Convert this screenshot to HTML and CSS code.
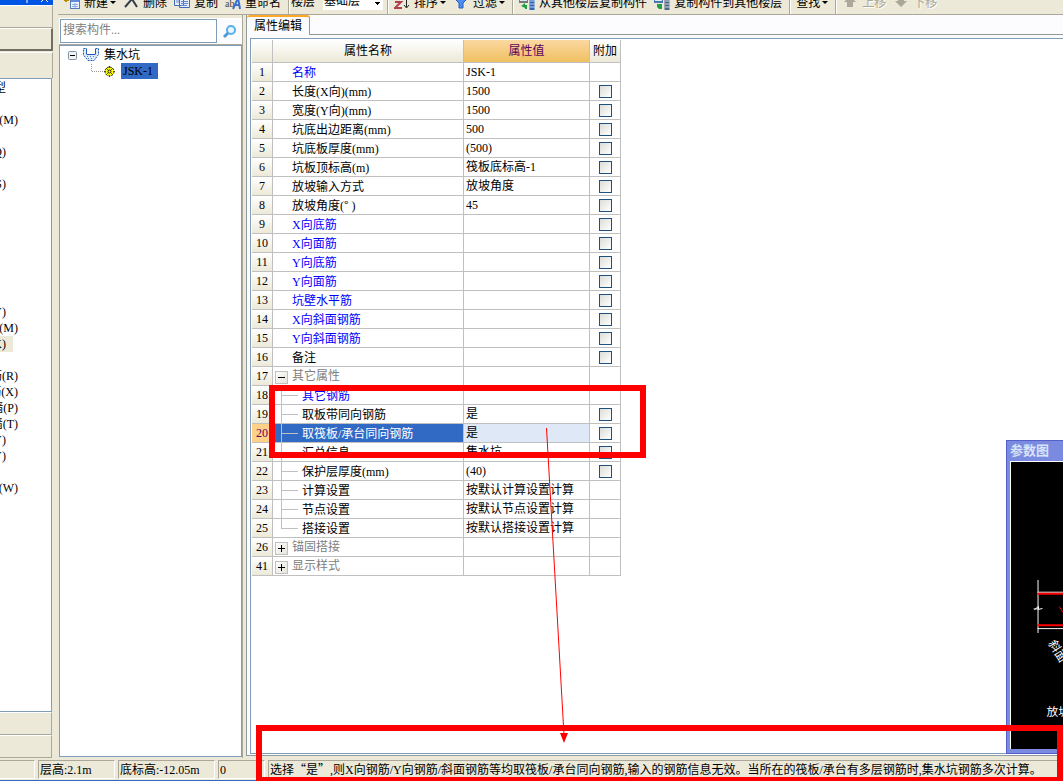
FILE: index.html
```html
<!DOCTYPE html>
<html lang="zh-CN">
<head>
<meta charset="utf-8">
<title>属性编辑</title>
<link rel="stylesheet" href="styles.css">
</head>
<body>
<div class="workspace">
  <aside class="modules">
    <div class="modules-title"><svg width="30" height="5" viewBox="0 0 30 5"><path d="M4 0V3M18 2L20 0M23 0L25 2" stroke="#fff" fill="none"/></svg></div>
    <div class="bar"></div>
    <div class="bar raised"></div>
    <div class="bar open"></div>
    <ul class="module-list">
      <li><span class="short">型</span></li><li></li>
      <li><span>墙(M)</span></li><li></li>
      <li><span class="short">Q)</span></li><li></li>
      <li><span class="short">S)</span></li><li></li><li></li><li></li><li></li><li></li><li></li><li></li>
      <li><span class="short">Y)</span></li>
      <li><span>墙(M)</span></li>
      <li class="current"><span class="short">K)</span></li><li></li>
      <li><span>筋(R)</span></li>
      <li><span>筋(X)</span></li>
      <li><span>墙(P)</span></li>
      <li><span>墙(T)</span></li>
      <li><span class="short">Y)</span></li>
      <li><span class="short">Y)</span></li><li></li>
      <li><span>子(W)</span></li>
    </ul>
    <div class="bar foot"></div>
    <div class="bar foot"></div>
  </aside>

  <div class="main">
    <div class="toolbar">
      <button><svg class="icon" viewBox="0 0 16 16"><path d="M2 0v7M0 5h5" stroke="#b58a00" stroke-width="2"/><rect x="6.500" y="4.500" width="9" height="9" fill="#eaf2ff" stroke="#5c7cb8"/><path d="M7 6h8" stroke="#5c8be0" stroke-width="2"/><path d="M8 9.500h6M8 11.500h6M11 8v5" stroke="#8faee0"/></svg>新建<i class="caret"></i></button>
      <button><svg class="icon" viewBox="0 0 16 16"><path d="M2 12L9 4L14 12M4 0L9 5" fill="none" stroke="#333b4d" stroke-width="2"/></svg>删除</button>
      <button><svg class="icon" viewBox="0 0 16 16"><path d="M.5.5h9v10h-9zM5.500 3.500h10v9h-10z" fill="#e4eeff" stroke="#426bb5"/><path d="M2 5h3M2 7h3M7 6.500h7M7 8.500h7M7 10.500h6" stroke="#6688c8"/></svg>复制</button>
      <button><svg class="icon" viewBox="0 0 16 16"><text x="0" y="12" class="glyph">ab</text><path d="M8 14L13 3L15 14M10 10h5" fill="none" stroke="#3b6fd0" stroke-width="2"/></svg>重命名</button>
      <span class="sep tight"></span>
      <label for="floor">楼层</label>
      <select id="floor"><option>基础层</option></select>
      <span class="sep"></span>
      <button><svg class="icon" viewBox="0 0 16 16"><path d="M1 7h6L1 13h7" fill="none" stroke="#b04050" stroke-width="2"/><path d="M2 5L4 0L6 5" fill="none" stroke="#4468b8" stroke-width="2"/><path d="M12.500 0v12M10 10l2.500 3L15 10" fill="none" stroke="#222"/></svg>排序<i class="caret"></i></button>
      <button><svg class="icon" viewBox="0 0 16 16"><path d="M3 2h10v3L10 8v5H6V8L3 5z" fill="#4e8df0" stroke="#245cc0"/></svg>过滤<i class="caret"></i></button>
      <span class="sep"></span>
      <button><svg class="icon" viewBox="0 0 16 16"><path d="M0 0h9v8H0z" fill="#777"/><path d="M1 1h7v5H1z" fill="#dce8fa"/><path d="M2 11l4-3v2h2v4H6v-1z" fill="#20a045"/><path d="M13 0v15" stroke="#3267b0" stroke-width="5"/><path d="M11 3h5M11 6h5M11 9h5M11 12h5" stroke="#b8d2ff"/></svg>从其他楼层复制构件</button>
      <button><svg class="icon" viewBox="0 0 16 16"><path d="M0 0h9v8H0z" fill="#4878b0"/><path d="M1 1h7v5H1z" fill="#dce8fa"/><path d="M3 9h5v5H5l-2-2z" fill="#20a045"/><path d="M13 0v15" stroke="#506888" stroke-width="5"/><path d="M11 3h5M11 6h5M11 9h5M11 12h5" stroke="#c8d4e8"/></svg>复制构件到其他楼层</button>
      <span class="sep"></span>
      <button>查找<i class="caret"></i></button>
      <span class="sep"></span>
      <button disabled><svg class="icon" viewBox="0 0 16 16"><path d="M8 1L14 7h-3v5H5V7H2z" fill="#aca899"/></svg>上移</button>
      <button disabled><svg class="icon" viewBox="0 0 16 16"><path d="M5 1h6v5h3L8 12L2 6h3z" fill="#aca899"/></svg>下移</button>
    </div>

    <div class="panes">
      <section class="components">
        <div class="search">
          <input type="text" aria-label="搜索构件" placeholder="搜索构件...">
          <button aria-label="搜索"><svg width="16" height="16" viewBox="0 0 16 16"><circle cx="9" cy="6" r="4" fill="#e8f6ff" stroke="#58b0ea" stroke-width="2"/><path d="M6 9L2 13" stroke="#4a9cdc" stroke-width="3"/></svg></button>
        </div>
        <div class="tree">
          <div class="node">
            <button class="fold" aria-label="折叠"><svg width="9" height="9" viewBox="0 0 9 9"><rect x=".5" y=".5" width="8" height="8" rx="1" fill="#f4f3ec" stroke="#7b93ad"/><path d="M2 4.500h5" stroke="#000"/></svg></button>
            <svg class="pit" width="16" height="14" viewBox="0 0 16 14"><path d="M.5.5h3v6h9v-6h3v6L11 12.500H5L.5 7z" fill="#dceafa" stroke="#1d58b8" stroke-dasharray="2 1"/><path d="M4 6.500h8M3.500 1v5M12.500 1v5" stroke="#1d58b8"/><path d="M4 8.500h8M5 10.500h6" stroke="#4d8bd0" stroke-dasharray="1 2"/></svg>
            集水坑
          </div>
          <div class="node child">
            <svg class="dots" width="12" height="16" viewBox="0 0 12 16"><path d="M.5 1v7.500H12" fill="none" stroke="#999" stroke-dasharray="1 1"/></svg>
            <svg class="gear" width="11" height="11" viewBox="0 0 11 11"><circle cx="5.500" cy="5.500" r="4.500" fill="#ff0" stroke="#222" stroke-dasharray="2 1"/><path d="M5.500 0v11M0 5.500h11M2 2l7 7M9 2L2 9" stroke="#554f00"/><path d="M5.500 2v7M2 5.500h7" stroke="#ff0"/><circle cx="5.500" cy="5.500" r="1.500" fill="#ff0" stroke="#222"/></svg>
            <span class="picked">JSK-1</span>
          </div>
        </div>
      </section>

      <section class="editor">
        <div class="tabs"><button class="tab">属性编辑</button></div>
        <div class="sheet">
          <table>
            <colgroup><col class="c-num"><col class="c-name"><col class="c-value"><col class="c-add"></colgroup>
            <thead><tr><th></th><th>属性名称</th><th class="active">属性值</th><th>附加</th></tr></thead>
            <tbody>
              <tr><th>1</th><td class="name key">名称</td><td>JSK-1</td><td></td></tr>
              <tr><th>2</th><td class="name">长度(X向)(mm)</td><td>1500</td><td><input type="checkbox" aria-label="附加 长度"></td></tr>
              <tr><th>3</th><td class="name">宽度(Y向)(mm)</td><td>1500</td><td><input type="checkbox" aria-label="附加 宽度"></td></tr>
              <tr><th>4</th><td class="name">坑底出边距离(mm)</td><td>500</td><td><input type="checkbox" aria-label="附加 坑底出边距离"></td></tr>
              <tr><th>5</th><td class="name">坑底板厚度(mm)</td><td>(500)</td><td><input type="checkbox" aria-label="附加 坑底板厚度"></td></tr>
              <tr><th>6</th><td class="name">坑板顶标高(m)</td><td>筏板底标高-1</td><td><input type="checkbox" aria-label="附加 坑板顶标高"></td></tr>
              <tr><th>7</th><td class="name">放坡输入方式</td><td>放坡角度</td><td><input type="checkbox" aria-label="附加 放坡输入方式"></td></tr>
              <tr><th>8</th><td class="name">放坡角度(<b>°</b> )</td><td>45</td><td><input type="checkbox" aria-label="附加 放坡角度"></td></tr>
              <tr><th>9</th><td class="name key">X向底筋</td><td></td><td><input type="checkbox" aria-label="附加 X向底筋"></td></tr>
              <tr><th>10</th><td class="name key">X向面筋</td><td></td><td><input type="checkbox" aria-label="附加 X向面筋"></td></tr>
              <tr><th>11</th><td class="name key">Y向底筋</td><td></td><td><input type="checkbox" aria-label="附加 Y向底筋"></td></tr>
              <tr><th>12</th><td class="name key">Y向面筋</td><td></td><td><input type="checkbox" aria-label="附加 Y向面筋"></td></tr>
              <tr><th>13</th><td class="name key">坑壁水平筋</td><td></td><td><input type="checkbox" aria-label="附加 坑壁水平筋"></td></tr>
              <tr><th>14</th><td class="name key">X向斜面钢筋</td><td></td><td><input type="checkbox" aria-label="附加 X向斜面钢筋"></td></tr>
              <tr><th>15</th><td class="name key">Y向斜面钢筋</td><td></td><td><input type="checkbox" aria-label="附加 Y向斜面钢筋"></td></tr>
              <tr><th>16</th><td class="name">备注</td><td></td><td><input type="checkbox" aria-label="附加 备注"></td></tr>
              <tr><th>17</th><td class="group"><button class="toggle" aria-label="折叠 其它属性"><svg width="13" height="13" viewBox="0 0 13 13"><path d="M3 6.500h7" stroke="#000"/></svg></button>其它属性</td><td></td><td></td></tr>
              <tr><th>18</th><td class="name leaf key">其它钢筋</td><td></td><td></td></tr>
              <tr><th>19</th><td class="name leaf">取板带同向钢筋</td><td>是</td><td><input type="checkbox" aria-label="附加 取板带同向钢筋"></td></tr>
              <tr class="selected"><th>20</th><td class="name leaf">取筏板/承台同向钢筋</td><td>是</td><td><input type="checkbox" aria-label="附加 取筏板/承台同向钢筋"></td></tr>
              <tr><th>21</th><td class="name leaf">汇总信息</td><td>集水坑</td><td><input type="checkbox" aria-label="附加 汇总信息"></td></tr>
              <tr><th>22</th><td class="name leaf">保护层厚度(mm)</td><td>(40)</td><td><input type="checkbox" aria-label="附加 保护层厚度"></td></tr>
              <tr><th>23</th><td class="name leaf">计算设置</td><td>按默认计算设置计算</td><td></td></tr>
              <tr><th>24</th><td class="name leaf">节点设置</td><td>按默认节点设置计算</td><td></td></tr>
              <tr><th>25</th><td class="name leaf last">搭接设置</td><td>按默认搭接设置计算</td><td></td></tr>
              <tr><th>26</th><td class="group"><button class="toggle" aria-label="展开 锚固搭接"><svg width="13" height="13" viewBox="0 0 13 13"><path d="M3 6.500h7M6.500 3v7" stroke="#000"/></svg></button>锚固搭接</td><td></td><td></td></tr>
              <tr><th>41</th><td class="group"><button class="toggle" aria-label="展开 显示样式"><svg width="13" height="13" viewBox="0 0 13 13"><path d="M3 6.500h7M6.500 3v7" stroke="#000"/></svg></button>显示样式</td><td></td><td></td></tr>
            </tbody>
          </table>
        </div>
      </section>
    </div>
  </div>
</div>

<footer class="status">
  <span class="cell s-blank"></span>
  <span class="cell s-height">层高:2.1m</span>
  <span class="cell s-level">底标高:-12.05m</span>
  <span class="cell s-count">0</span>
  <span class="cell s-hint">选择<b>“</b>是<b>”</b>,则X向钢筋/Y向钢筋/斜面钢筋等均取筏板/承台同向钢筋,输入的钢筋信息无效。当所在的筏板/承台有多层钢筋时,集水坑钢筋多次计算。</span>
</footer>

<div class="float">
  <div class="float-title">参数图</div>
  <svg class="drawing" width="60" height="288" viewBox="0 0 60 288">
    <path d="M27.500 118v54M27 130.500h33M27 167.500h33M23 147.500h5" stroke="#fff" fill="none"/>
    <path d="M24 148l4-3v3l4-1" stroke="#fff" fill="none"/>
    <path d="M27 132h33M27 164h33" stroke="#f00" stroke-width="2"/>
    <path d="M49 145l4 6" stroke="#f00"/>
    <text x="40" y="186" transform="rotate(58 42 182)">斜面</text>
    <text x="36" y="256">放坡</text>
  </svg>
</div>

<svg class="marks" width="1063" height="781" viewBox="0 0 1063 781">
  <rect x="272" y="388" width="371" height="67" fill="none" stroke="#f00" stroke-width="6"/>
  <rect x="259" y="728" width="801" height="52" fill="none" stroke="#f00" stroke-width="6"/>
  <path d="M546.500 428L564 735" stroke="#f00"/>
  <path d="M560 733h8l-4 10z" fill="#f00"/>
</svg>
</body>
</html>
```
FILE: styles.css
```css
* { box-sizing: border-box; }
body {
  margin: 0;
  height: 100vh;
  overflow: hidden;
  position: relative;
  display: flex;
  flex-direction: column;
  background: #ece9d8;
  color: #000;
  font: 12px/16px "Liberation Serif", "Noto Sans CJK SC", serif;
  white-space: nowrap;
}
b { font-family: "Noto Sans CJK SC", sans-serif; font-weight: 400; line-height: 0; }
button, input, select { font: inherit; color: inherit; margin: 0; padding: 0; }
button { background: none; border: 0; }
svg { display: block; flex: none; }

.workspace { flex: 1; min-height: 0; display: flex; gap: 5px; }

.modules { width: 53px; flex: none; display: flex; flex-direction: column; }
.modules-title { height: 5px; background: #0054e3; display: flex; justify-content: flex-end; }
.bar { height: 23px; border-top: 1px solid #fff; border-right: 1px solid #aca899; border-bottom: 1px solid #aca899; }
.bar.raised { border-right: 2px solid #716f64; border-bottom: 2px solid #716f64; }
.bar.open { height: 26px; border-bottom: 0; margin-top: 1px; }
.bar.foot { margin-right: 1px; }
.module-list {
  flex: 1; min-height: 0; overflow: hidden;
  margin: 0 1px 0 0; padding: 1px 0 0;
  list-style: none; background: #fff;
  border: solid #7f9db9; border-width: 1px 1px 1px 0;
}
.module-list li { height: 16px; }
.module-list span { display: flex; justify-content: flex-end; width: 18px; overflow: hidden; }
.module-list .short { width: 6px; }
.module-list .current { width: 13px; background: #ece9d8; }

.main { flex: 1; min-width: 0; display: flex; flex-direction: column; }
.toolbar {
  height: 15px; flex: none; overflow: hidden;
  display: flex; align-items: flex-end;
  padding-left: 6px; border-bottom: 1px solid #aca899;
}
.toolbar > * { flex: none; height: 23px; }
.toolbar button { display: flex; align-items: center; gap: 4px; margin-right: 7px; }
.toolbar button:disabled { color: #aca899; text-shadow: 1px 1px #fff; }
.toolbar label { line-height: 23px; margin-right: 8px; }
.icon { width: 16px; height: 16px; }
.glyph { font-size: 10px; fill: #444; }
.caret { border: 3px solid transparent; border-top-color: #000; border-bottom: 0; margin-left: -2px; }
.sep { width: 2px; margin-right: 5px; border-left: 1px solid #aca899; border-right: 1px solid #fff; }
.sep.tight { margin-right: 1px; }
.toolbar select {
  width: 60px; height: 19px; margin: 0 4px 4px 0; padding-left: 1px;
  appearance: none; border: 0; border-radius: 0;
  background: linear-gradient(#000, #000) 52px 11px / 5px 1px no-repeat, linear-gradient(#000, #000) 53px 12px / 3px 1px no-repeat, linear-gradient(#000, #000) 54px 13px / 1px 1px no-repeat, #fff;
}

.panes { flex: 1; min-height: 0; display: flex; gap: 3px; }
.components { width: 185px; flex: none; padding: 3px 0 1px 1px; display: flex; flex-direction: column; border-right: 1px solid #aca899; }
.search { height: 27px; flex: none; display: flex; background: #fcfcfe; border-top: 1px solid #fff; border-bottom: 1px solid #aca899; }
.search input { flex: 1; min-width: 0; padding: 0 0 3px 2px; border: 1px solid #7f9db9; background: #fff; margin: 0 0 1px 1px; outline: 0; border-radius: 0; }
.search input::placeholder { color: #808080; opacity: 1; }
.search button { width: 25px; display: flex; align-items: center; justify-content: center; }
.tree { flex: 1; padding-top: 1px; background: #fff; border: 1px solid #7f9db9; }
.node { display: flex; align-items: center; height: 16px; padding-left: 8px; }
.pit { margin: 0 5px 0 6px; }
.node.child { padding-left: 31px; }
.gear { margin: 0 6px 0 1px; }
.picked { background: #316ac5; width: 37px; padding-left: 2px; }

.editor { flex: 1; min-width: 0; display: flex; flex-direction: column; border-left: 1px solid #919b9c; border-bottom: 1px solid #919b9c; margin-bottom: 2px; background: #fcfcfe; }
.tabs { height: 20px; flex: none; display: flex; background: #fcfcfe; border-bottom: 1px solid #919b9c; }
.tab {
  width: 63px; height: 20px; line-height: 16px; background: #fcfcfe;
  border: solid #919b9c; border-width: 0 1px 0 0;
  border-top: 2px solid #ffa827; border-radius: 3px 3px 0 0;
}
.sheet { flex: 1; min-height: 0; margin: 3px 0 1px 3px; padding: 1px; background: #fff; border: solid #7f9db9; border-width: 1px 0 1px 1px; }

table { table-layout: fixed; width: 369px; border-collapse: separate; border-spacing: 0; }
.c-num { width: 21px; }
.c-name { width: 191px; }
.c-value { width: 126px; }
.c-add { width: 31px; }
th, td { height: 19px; padding: 0; border: solid #c0c0c0; border-width: 0 1px 1px 0; line-height: 16px; font-weight: 400; overflow: hidden; }
th { background: linear-gradient(#fff, #ece9d8); text-align: center; }
thead th { height: 23px; }
thead .active { background: linear-gradient(#fad8a0, #f0bf60); color: #600060; }
td { text-align: left; padding-left: 2px; background: #fff; }
td:last-child { padding: 0 0 0 9px; }
td input { display: block; appearance: none; width: 13px; height: 13px; border: 1px solid #1c5180; background: linear-gradient(135deg, #dcdcd7, #fff); }
td.name { padding: 2px 0 0 19px; }
td.key { color: #00f; }
td.group { color: #808080; padding-left: 2px; }
.toggle { display: inline-block; vertical-align: middle; width: 13px; height: 13px; margin-right: 4px; color: #000; outline: 1px solid #c0c0c0; outline-offset: -1px; background: linear-gradient(135deg, #fff, #e4e2d8); }
td.leaf {
  padding-left: 29px;
  background: linear-gradient(#c0c0c0, #c0c0c0) 8px 0 / 1px 100% no-repeat, linear-gradient(#c0c0c0, #c0c0c0) 8px 9px / 17px 1px no-repeat, #fff;
}
td.last { background-size: 1px 9px, 17px 1px, auto; }
.selected th { background: #ffd087; color: #600060; }
.selected td:nth-child(3) { background: #dee8f6; }
.selected td.leaf {
  color: #fff;
  background: linear-gradient(#c0c0c0, #c0c0c0) 8px 0 / 1px 100% no-repeat, linear-gradient(#c0c0c0, #c0c0c0) 8px 9px / 17px 1px no-repeat, linear-gradient(90deg, #fff 2px, #316ac5 2px);
}

.status { flex: none; height: 23px; display: flex; gap: 3px; padding: 2px 0 1px; border-bottom: 1px solid #316ac5; }
.cell { flex: none; padding-left: 1px; line-height: 18px; border: solid; border-width: 1px; border-color: #aca899 #fff #fff #aca899; }
.s-blank { width: 35px; border-left: 0; }
.s-height { width: 77px; }
.s-level { width: 97px; }
.s-count { width: 47px; }
.s-hint { flex: 1; min-width: 0; overflow: hidden; }

.float {
  position: absolute; left: 1006px; top: 440px; right: 0;
  overflow: hidden; padding: 0 0 4px 3px;
  background: #7a8ae0; border: solid #5460c8; border-width: 1px 0 1px 1px;
}
.float-title { height: 20px; line-height: 20px; color: #d8e4f8; font-size: 13px; font-weight: 700; }
.drawing { background: #000; border-left: 1px solid #fff; border-top: 1px solid #fff; }
.drawing text { fill: #fff; }
.marks { position: absolute; left: 0; top: 0; pointer-events: none; }
```
